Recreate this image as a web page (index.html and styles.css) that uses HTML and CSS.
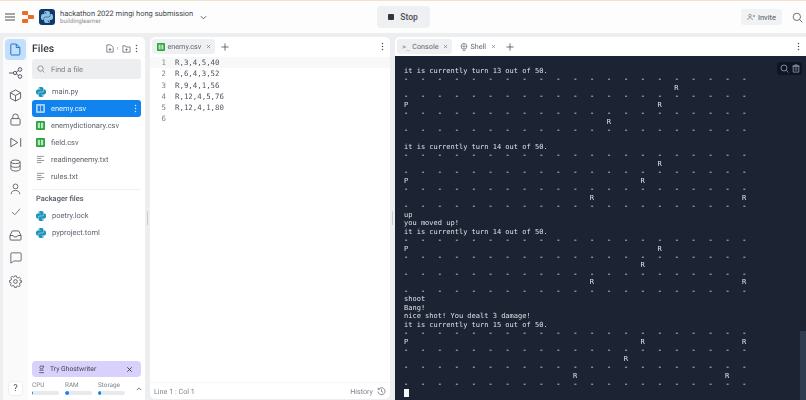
FILE: index.html
```html
<!DOCTYPE html>
<html lang="en">
<head>
<meta charset="utf-8">
<title>hackathon 2022 mingi hong submission</title>
<link rel="stylesheet" href="styles.css">
</head>
<body>
<svg class="defs" width="0" height="0" aria-hidden="true">
  <defs>
    <symbol id="py" viewBox="0 0 24 24">
      <path d="M14.25.18l.9.2.73.26.59.3.45.32.34.34.25.34.16.33.1.3.04.26.02.2-.01.13V8.5l-.05.63-.13.55-.21.46-.26.38-.3.31-.33.25-.35.19-.35.14-.33.1-.3.07-.26.04-.21.02H8.77l-.69.05-.59.14-.5.22-.41.27-.33.32-.27.35-.2.36-.15.37-.1.35-.07.32-.04.27-.02.21v3.06H3.17l-.21-.03-.28-.07-.32-.12-.35-.18-.36-.26-.36-.36-.35-.46-.32-.59-.28-.73-.21-.88-.14-1.05-.05-1.23.06-1.22.16-1.04.24-.87.32-.71.36-.57.4-.44.42-.33.42-.24.4-.16.36-.1.32-.05.24-.01h.16l.06.01h8.16v-.83H6.18l-.01-2.75-.02-.37.05-.34.11-.31.17-.28.25-.26.31-.23.38-.2.44-.18.51-.15.58-.12.64-.1.71-.06.77-.04.84-.02 1.27.05zm-6.3 1.98l-.23.33-.08.41.08.41.23.34.33.22.41.09.41-.09.33-.22.23-.34.08-.41-.08-.41-.23-.33-.33-.22-.41-.09-.41.09zm13.09 3.95l.28.06.32.12.35.18.36.27.36.35.35.47.32.59.28.73.21.88.14 1.04.05 1.23-.06 1.23-.16 1.04-.24.86-.32.71-.36.57-.4.45-.42.33-.42.24-.4.16-.36.09-.32.05-.24.02-.16-.01h-8.22v.82h5.84l.01 2.76.02.36-.05.34-.11.31-.17.29-.25.25-.31.24-.38.2-.44.17-.51.15-.58.13-.64.09-.71.07-.77.04-.84.01-1.27-.04-1.07-.14-.9-.2-.73-.25-.59-.3-.45-.33-.34-.34-.25-.34-.16-.33-.1-.3-.04-.25-.02-.2.01-.13v-5.34l.05-.64.13-.54.21-.46.26-.38.3-.32.33-.24.35-.2.35-.14.33-.1.3-.06.26-.04.21-.02.13-.01h5.84l.69-.05.59-.14.5-.21.41-.28.33-.32.27-.35.2-.36.15-.36.1-.35.07-.32.04-.28.02-.21V6.07h2.09l.14.01zm-6.47 14.25l-.23.33-.08.41.08.41.23.33.33.23.41.08.41-.08.33-.23.23-.33.08-.41-.08-.41-.23-.33-.33-.23-.41-.08-.41.08z"/>
    </symbol>
    <symbol id="csv" viewBox="0 0 10 10">
      <rect width="10" height="10" rx="1" fill="#2ba53f"/>
      <rect x="2" y="2" width="2.500" height="6" fill="#b9e6c2"/>
      <rect x="5.500" y="2" width="2.500" height="6" fill="#b9e6c2"/>
    </symbol>
    <symbol id="txt" viewBox="0 0 10 10">
      <path d="M1 1.500h8M1 3.800h5M1 6.100h8M1 8.400h5" fill="none" stroke="#8a8f98" stroke-width="1"/>
    </symbol>
    <symbol id="dots" viewBox="0 0 4 12">
      <circle cx="2" cy="2" r="1"/><circle cx="2" cy="6" r="1"/><circle cx="2" cy="10" r="1"/>
    </symbol>
    <symbol id="x" viewBox="0 0 8 8">
      <path d="M1.500 1.500l5 5M6.500 1.500l-5 5" fill="none" stroke="currentColor" stroke-width="1"/>
    </symbol>
    <symbol id="plus" viewBox="0 0 10 10">
      <path d="M5 .5v9M.5 5h9" fill="none" stroke="currentColor" stroke-width="1"/>
    </symbol>
    <symbol id="search" viewBox="0 0 12 12">
      <circle cx="5.300" cy="5.300" r="4" fill="none" stroke="currentColor" stroke-width="1"/>
      <path d="M8.300 8.300l3 3" fill="none" stroke="currentColor" stroke-width="1"/>
    </symbol>
  </defs>
</svg>

<div class="app">
  <header class="topbar">
    <div class="top-left">
      <svg class="burger" viewBox="0 0 10 8" width="10" height="8"><path d="M0 1h10M0 4h10M0 7h10" stroke="#4a4f57" stroke-width="1"/></svg>
      <svg class="replit" viewBox="0 0 12 12" width="12" height="12"><path d="M1 0h4a1 1 0 0 1 1 1v3H1a1 1 0 0 1-1-1V1a1 1 0 0 1 1-1zM6 4h5a1 1 0 0 1 1 1v2a1 1 0 0 1-1 1H6zM1 8h5v3a1 1 0 0 1-1 1H1a1 1 0 0 1-1-1V9a1 1 0 0 1 1-1z" fill="#ef6a24"/></svg>
      <div class="avatar"><svg width="12" height="12"><use href="#py" fill="#8fc0e4"/></svg></div>
      <div class="titles">
        <div class="title">hackathon 2022 mingi hong submission</div>
        <div class="owner">buildinglearner</div>
      </div>
      <svg class="chev" viewBox="0 0 8 5" width="7" height="5"><path d="M1 1l3 3 3-3" fill="none" stroke="#4a4f57" stroke-width="1"/></svg>
    </div>
    <button class="stop"><span class="stop-sq"></span>Stop</button>
    <div class="top-right">
      <button class="invite">
        <svg viewBox="0 0 12 10" width="11" height="10"><circle cx="4.500" cy="2.800" r="2" fill="none" stroke="#5f6570" stroke-width=".9"/><path d="M.8 9.500c0-2.200 1.600-3.300 3.700-3.300s3.700 1.100 3.700 3.300M9 3.500h3M10.500 2v3" fill="none" stroke="#5f6570" stroke-width=".9"/></svg>
        Invite
      </button>
      <svg class="top-search" width="11" height="11"><use href="#search"/></svg>
    </div>
  </header>

  <main class="workspace">
    <section class="left panel">
      <nav class="rail">
        <div class="rail-btn active"><svg viewBox="0 0 14 16" width="11" height="13"><path d="M2 1h6l4.500 4.500V14a1 1 0 0 1-1 1H2a1 1 0 0 1-1-1V2a1 1 0 0 1 1-1zM8 1v4.500h4.500" fill="none" stroke="#1d6fc4" stroke-width="1.200"/></svg></div>
        <div class="rail-btn"><svg viewBox="0 0 14 12" width="14" height="12"><circle cx="6" cy="6" r="1.600" fill="none" stroke="#555b64"/><circle cx="11" cy="2.500" r="1.800" fill="none" stroke="#555b64"/><circle cx="11" cy="9.500" r="1.800" fill="none" stroke="#555b64"/><path d="M0 6h4.400M7.400 5l2.200-1.500M7.400 7l2.200 1.500" fill="none" stroke="#555b64"/></svg></div>
        <div class="rail-btn"><svg viewBox="0 0 14 14" width="13" height="13"><path d="M7 1l5.500 3v6L7 13 1.500 10V4zM1.500 4L7 7l5.500-3M7 7v6" fill="none" stroke="#555b64"/></svg></div>
        <div class="rail-btn"><svg viewBox="0 0 12 14" width="11" height="13"><rect x="1" y="6" width="10" height="7" rx="1.200" fill="none" stroke="#555b64"/><path d="M3 6V4a3 3 0 0 1 6 0v2" fill="none" stroke="#555b64"/></svg></div>
        <div class="rail-btn"><svg viewBox="0 0 14 12" width="12" height="11"><path d="M1 1l8 5-8 5zM12.500 1v10" fill="none" stroke="#555b64" stroke-width="1.100"/></svg></div>
        <div class="rail-btn"><svg viewBox="0 0 12 14" width="11" height="13"><ellipse cx="6" cy="3" rx="5" ry="2" fill="none" stroke="#555b64"/><path d="M1 3v8c0 1.100 2.200 2 5 2s5-.9 5-2V3M1 7c0 1.100 2.200 2 5 2s5-.9 5-2" fill="none" stroke="#555b64"/></svg></div>
        <div class="rail-btn"><svg viewBox="0 0 12 14" width="11" height="12"><circle cx="6" cy="4" r="2.800" fill="none" stroke="#555b64"/><path d="M1 13c0-3 2.200-4.300 5-4.300s5 1.300 5 4.300" fill="none" stroke="#555b64"/></svg></div>
        <div class="rail-btn"><svg viewBox="0 0 12 10" width="10" height="8"><path d="M1 5l3.500 3.500L11 1" fill="none" stroke="#555b64"/></svg></div>
        <div class="rail-btn"><svg viewBox="0 0 14 12" width="13" height="11"><path d="M1 6l2.500-5h7L13 6v4a1 1 0 0 1-1 1H2a1 1 0 0 1-1-1zM1 6h3.500l1 1.500h3l1-1.500H13" fill="none" stroke="#555b64"/></svg></div>
        <div class="rail-btn"><svg viewBox="0 0 14 14" width="12" height="12"><path d="M2 1h10a1 1 0 0 1 1 1v7.500a1 1 0 0 1-1 1H4.500L1 13V2a1 1 0 0 1 1-1z" fill="none" stroke="#555b64"/></svg></div>
        <div class="rail-btn"><svg viewBox="0 0 14 14" width="13" height="13"><circle cx="7" cy="7" r="2" fill="none" stroke="#555b64"/><path d="M6 1h2l.4 1.700 1.300.6 1.500-.9 1.400 1.400-.9 1.500.6 1.300L13.500 6v2l-1.700.4-.6 1.300.9 1.500-1.400 1.400-1.500-.9-1.300.6L8 13.500H6l-.4-1.700-1.300-.6-1.500.9-1.400-1.400.9-1.500-.6-1.300L.5 8V6l1.700-.4.6-1.300-.9-1.500 1.400-1.400 1.500.9 1.300-.6z" fill="none" stroke="#555b64" stroke-width=".9"/></svg></div>
        <div class="help">?</div>
      </nav>

      <div class="files">
        <div class="files-head">
          <h2>Files</h2>
          <div class="files-actions">
            <svg viewBox="0 0 10 11" width="8" height="9"><path d="M1 1h5l3 3v6H1zM5 5v3.500M3.300 6.700h3.400" fill="none" stroke="#555b64" stroke-width=".9"/></svg>
            <span class="tick"></span>
            <svg viewBox="0 0 11 10" width="9" height="8"><path d="M1 1h3l1 1.500h5V9H1zM5.500 4.300v3M4 5.800h3" fill="none" stroke="#555b64" stroke-width=".9"/></svg>
            <svg class="dots" width="3" height="9"><use href="#dots"/></svg>
          </div>
        </div>
        <div class="find"><svg width="8" height="8"><use href="#search"/></svg>Find a file</div>
        <ul class="tree">
          <li><svg class="py" width="10" height="10"><use href="#py"/></svg>main.py</li>
          <li class="sel"><svg viewBox="0 0 10 10" width="9" height="9"><rect width="10" height="10" rx="1" fill="#a9d1f7"/><rect x="2" y="2" width="2.500" height="6" fill="#1083ee"/><rect x="5.500" y="2" width="2.500" height="6" fill="#1083ee"/></svg>enemy.csv<svg class="sel-dots" width="3" height="9"><use href="#dots"/></svg></li>
          <li><svg width="9" height="9"><use href="#csv"/></svg>enemydictionary.csv</li>
          <li><svg width="9" height="9"><use href="#csv"/></svg>field.csv</li>
          <li><svg width="9" height="9"><use href="#txt"/></svg>readingenemy.txt</li>
          <li><svg width="9" height="9"><use href="#txt"/></svg>rules.txt</li>
        </ul>
        <div class="pack-title">Packager files</div>
        <ul class="tree">
          <li><svg class="py" width="10" height="10"><use href="#py"/></svg>poetry.lock</li>
          <li><svg class="py" width="10" height="10"><use href="#py"/></svg>pyproject.toml</li>
        </ul>
        <div class="files-foot">
          <div class="ghost">
            <svg viewBox="0 0 10 12" width="7" height="9"><circle cx="5" cy="3" r="2.300" fill="none" stroke="#33373d"/><path d="M2 7h6M1.500 10.500h7M8 .5v2" stroke="#33373d" fill="none"/></svg>
            <span>Try Ghostwriter</span>
            <svg class="ghost-x" width="7" height="7"><use href="#x"/></svg>
          </div>
          <div class="meters">
            <div class="meter"><span>CPU</span><i><b class="cpu"></b></i></div>
            <div class="meter"><span>RAM</span><i><b class="ram"></b></i></div>
            <div class="meter"><span>Storage</span><i><b class="sto"></b></i></div>
            <svg class="meter-chev" viewBox="0 0 8 5" width="6" height="4"><path d="M1 4l3-3 3 3" fill="none" stroke="#4a4f57"/></svg>
          </div>
        </div>
      </div>
    </section>

    <section class="editor panel">
      <div class="tabs">
        <div class="tab on"><svg width="8" height="8"><use href="#csv"/></svg>enemy.csv<svg class="tab-x" width="5" height="5"><use href="#x"/></svg></div>
        <svg class="tab-plus" width="8" height="8"><use href="#plus"/></svg>
        <svg class="tab-dots" width="3" height="9"><use href="#dots"/></svg>
      </div>
      <div class="code">
        <div class="ln cur"><span>1</span>R,3,4,5,40</div>
        <div class="ln"><span>2</span>R,6,4,3,52</div>
        <div class="ln"><span>3</span>R,9,4,1,56</div>
        <div class="ln"><span>4</span>R,12,4,5,76</div>
        <div class="ln"><span>5</span>R,12,4,1,80</div>
        <div class="ln"><span>6</span></div>
      </div>
      <div class="status"><span>Line 1 : Col 1</span><span class="hist">History<svg viewBox="0 0 12 12" width="9" height="9"><path d="M2.500 2.500A4.700 4.700 0 1 1 1.300 6M6 3.200V6l2 1.200M1.500 1v2.200h2.200" fill="none" stroke="#5f6570"/></svg></span></div>
    </section>

    <section class="console panel">
      <div class="tabs">
        <div class="tab on"><span class="prompt">&gt;_</span>Console<svg class="tab-x" width="5" height="5"><use href="#x"/></svg></div>
        <div class="tab"><svg viewBox="0 0 10 10" width="8" height="8"><circle cx="5" cy="4.200" r="3.600" fill="none" stroke="#70767f"/><path d="M1.500 4.200h7M5 .6v7.200M3 9.500h4" fill="none" stroke="#70767f" stroke-width=".8"/></svg>Shell<svg class="tab-x" width="5" height="5"><use href="#x"/></svg></div>
        <svg class="tab-plus" width="8" height="8"><use href="#plus"/></svg>
        <svg class="tab-dots" width="3" height="9"><use href="#dots"/></svg>
      </div>
      <div class="term">
        <div class="term-tools">
          <svg width="9" height="9"><use href="#search"/></svg>
          <svg viewBox="0 0 10 11" width="8" height="9"><path d="M1.500 2.500h7v7.500h-7zM.5 2.500h9M3.500 2.500V1h3v1.500M3.300 5h3.400M3.300 7.300h3.400" fill="none" stroke="currentColor" stroke-width=".9"/></svg>
        </div>
        <div class="scroll-thumb"></div>
<pre class="out">it is currently turn 13 out of 50.
<b>-   -   -   -   -   -   -   -   -   -   -   -   -   -   -   -   -   -   -   -   -</b>
                                                                R
<b>-   -   -   -   -   -   -   -   -   -   -   -   -   -   -   -   -   -   -   -   -</b>
P                                                           R
<b>-   -   -   -   -   -   -   -   -   -   -   -   -   -   -   -   -   -   -   -   -</b>
                                                R
<b>-   -   -   -   -   -   -   -   -   -   -   -   -   -   -   -   -   -   -   -   -</b>

it is currently turn 14 out of 50.
<b>-   -   -   -   -   -   -   -   -   -   -   -   -   -   -   -   -   -   -   -   -</b>
                                                            R
<b>-   -   -   -   -   -   -   -   -   -   -   -   -   -   -   -   -   -   -   -   -</b>
P                                                       R
<b>-   -   -   -   -   -   -   -   -   -   -   -   -   -   -   -   -   -   -   -   -</b>
                                            R                                   R
<b>-   -   -   -   -   -   -   -   -   -   -   -   -   -   -   -   -   -   -   -   -</b>
up
you moved up!
it is currently turn 14 out of 50.
<b>-   -   -   -   -   -   -   -   -   -   -   -   -   -   -   -   -   -   -   -   -</b>
P                                                           R
<b>-   -   -   -   -   -   -   -   -   -   -   -   -   -   -   -   -   -   -   -   -</b>
                                                        R
<b>-   -   -   -   -   -   -   -   -   -   -   -   -   -   -   -   -   -   -   -   -</b>
                                            R                                   R
<b>-   -   -   -   -   -   -   -   -   -   -   -   -   -   -   -   -   -   -   -   -</b>
shoot
Bang!
nice shot! You dealt 3 damage!
it is currently turn 15 out of 50.
<b>-   -   -   -   -   -   -   -   -   -   -   -   -   -   -   -   -   -   -   -   -</b>
P                                                       R                       R
<b>-   -   -   -   -   -   -   -   -   -   -   -   -   -   -   -   -   -   -   -   -</b>
                                                    R
<b>-   -   -   -   -   -   -   -   -   -   -   -   -   -   -   -   -   -   -   -   -</b>
                                        R                                   R
<b>-   -   -   -   -   -   -   -   -   -   -   -   -   -   -   -   -   -   -   -   -</b>
<span class="cursor"></span></pre>
      </div>
    </section>
    <span class="grip grip-a"></span>
    <span class="grip grip-b"></span>
  </main>
</div>
</body>
</html>
```

FILE: styles.css
```css
* { box-sizing: border-box; }
html, body { margin: 0; height: 100%; }
body {
  width: 806px;
  height: 400px;
  overflow: hidden;
  background: #eceef0;
  font-family: Roboto, "Noto Sans", sans-serif;
  color: #3c4149;
  text-rendering: geometricPrecision;
}
.defs { position: absolute; }
ul { list-style: none; margin: 0; padding: 0; }
button { font: inherit; border: 0; }

.app { display: flex; flex-direction: column; height: 400px; filter: blur(.3px); }

.topbar {
  height: 33px;
  flex: none;
  display: grid;
  grid-template-columns: 1fr auto 1fr;
  align-items: center;
  background: #fdfdfd;
  border-top: 1px solid #f3e0ca;
}
.top-left { display: flex; align-items: center; padding-left: 5px; }
.replit { margin-left: 7px; }
.avatar {
  width: 16px; height: 16px;
  margin-left: 5px;
  border-radius: 3px;
  background: #0b3a6b;
  display: flex; align-items: center; justify-content: center;
}
.titles { margin-left: 5px; }
.title { font-size: 7.500px; line-height: 9px; color: #44494f; white-space: nowrap; }
.owner { font-size: 6.200px; line-height: 7px; color: #8b9098; }
.chev { margin-left: 7px; margin-top: 1px; }
.stop {
  width: 53px; height: 22px;
  display: flex; align-items: center; justify-content: center; gap: 6px;
  background: #eff0f2;
  border-radius: 4px;
  font-size: 8.500px;
  font-weight: 500;
  color: #4a4f57;
}
.stop-sq { width: 6px; height: 6px; border-radius: 1px; background: #33373d; }
.top-right { display: flex; align-items: center; justify-content: flex-end; padding-right: 3px; }
.invite {
  width: 41px; height: 16px;
  display: flex; align-items: center; justify-content: center; gap: 3px;
  background: #f1f2f3;
  border-radius: 3px;
  font-size: 7.500px;
  color: #4f545c;
}
.top-search { margin-left: 10px; color: #5f6570; }

.workspace { position: relative; flex: 1; min-height: 0; display: flex; gap: 5px; padding: 4px 0 0 3px; }
.panel { background: #fff; border-radius: 5px 5px 0 0; overflow: hidden; }
.grip { position: absolute; top: 178px; width: 1.500px; height: 14px; background: #c8cbd0; border-radius: 1px; }
.grip-a { left: 146.700px; }
.grip-b { left: 391.700px; }

.left { width: 142px; flex: none; display: flex; }
.rail {
  width: 25px; flex: none;
  display: flex; flex-direction: column; align-items: center;
  padding-top: 2px;
  background: #fafafb;
}
.rail-btn {
  width: 21px; height: 21px;
  margin-bottom: 2.200px;
  display: flex; align-items: center; justify-content: center;
  border-radius: 4px;
  flex: none;
}
.rail-btn.active { background: #c3dffb; }
.help {
  margin-top: auto;
  margin-bottom: 4px;
  width: 15px; height: 15px;
  border: 1px solid #eceef0;
  border-radius: 4px;
  background: #fff;
  font-size: 9.500px;
  line-height: 13px;
  text-align: center;
  color: #4a4f57;
}

.files { flex: 1; min-width: 0; display: flex; flex-direction: column; padding: 0 4px; }
.files-head { height: 22px; display: flex; align-items: center; justify-content: space-between; padding-top: 1px; }
.files-head h2 { margin: 0; font-size: 10.500px; font-weight: 500; color: #33373d; }
.files-actions { display: flex; align-items: center; gap: 3.500px; color: #555b64; padding-right: 3px; }
.tick { width: 1px; height: 3px; background: #c8cbd0; }
.dots { margin-left: 1px; fill: #555b64; }
.find {
  height: 20px;
  margin-bottom: 4px;
  display: flex; align-items: center; gap: 6px;
  padding-left: 5px;
  background: #eceef0;
  border-radius: 3px;
  font-size: 7.500px;
  color: #7d828a;
}
.find svg { color: #6d727a; }
.tree li {
  position: relative;
  height: 17px;
  display: flex; align-items: center; gap: 6px;
  padding-left: 4px;
  border-radius: 3px;
  font-size: 7.500px;
  color: #5f6570;
}
.tree .py { fill: #1c93b8; }
.tree .sel { background: #1083ee; color: #eaf4fe; }
.sel-dots { position: absolute; right: 4px; top: 4px; fill: #d4e8fc; }
.pack-title {
  margin-top: 4px;
  height: 18px;
  padding: 4px 0 0 4px;
  border-top: 1px solid #f0f1f3;
  font-size: 7.500px;
  font-weight: 500;
  color: #555b64;
}
.files-foot { margin-top: auto; }
.ghost {
  height: 16px;
  display: flex; align-items: center; gap: 5px;
  padding: 0 8px 0 6px;
  background: #d9d1fb;
  border-radius: 4px;
  font-size: 6.800px;
  color: #3f4350;
}
.ghost span { flex: 1; }
.ghost-x { color: #33373d; }
.meters { position: relative; display: flex; gap: 6px; height: 23px; padding-top: 4px; }
.meter { width: 27px; }
.meter span { display: block; font-size: 6.400px; line-height: 9px; color: #7d828a; }
.meter i { display: block; height: 4px; margin-top: 1px; background: #e7e9ec; border-radius: 2px; overflow: hidden; }
.meter b { display: block; height: 100%; background: #1083ee; border-radius: 2px; }
.cpu { width: 1px; }
.ram { width: 4px; }
.sto { width: 3px; }
.meter-chev { position: absolute; right: -1px; top: 10px; }

.editor { width: 240px; flex: none; display: flex; flex-direction: column; border-radius: 5px; margin-bottom: 1px; }
.tabs { height: 19px; flex: none; display: flex; align-items: center; padding-left: 2px; position: relative; }
.tab {
  height: 15px;
  display: flex; align-items: center; gap: 2.500px;
  padding: 0 4px 0 5px;
  border-radius: 3px;
  font-size: 7.200px;
  color: #5f6570;
}
.tab.on { background: #eff0f2; }
.tab-x { margin-left: 2px; color: #70767f; }
.tab-plus { margin-left: 6px; color: #4a4f57; }
.tab-dots { position: absolute; right: 6px; top: 5px; fill: #4a4f57; }
.prompt { font-family: "DejaVu Sans Mono", monospace; font-size: 6.500px; }

.code { flex: 1; padding-top: 1px; font-family: "DejaVu Sans Mono", monospace; font-size: 7.400px; color: #4f545c; }
.ln { height: 11.300px; line-height: 11.300px; display: flex; white-space: pre; }
.ln.cur { background: #f8f8f9; }
.ln span { width: 25px; padding-right: 9px; text-align: right; color: #7d828a; flex: none; }
.status {
  height: 17px; flex: none;
  display: flex; align-items: center; justify-content: space-between;
  padding: 0 4px;
  border-top: 1px solid #f6f6f7;
  font-size: 7.200px;
  color: #80858d;
}
.hist { display: flex; align-items: center; gap: 4px; }

.console { flex: 1; min-width: 0; display: flex; flex-direction: column; border-radius: 5px 0 0 0; }
.console .tab + .tab { margin-left: 3px; }
.term { flex: 1; min-height: 0; position: relative; background: #1c2333; overflow: hidden; padding: 10.700px 0 0 9px; }
.out {
  margin: 0;
  font-family: "DejaVu Sans Mono", monospace;
  font-size: 7.030px;
  line-height: 8.470px;
  color: #dde0e5;
}
.out b {
  font-family: "Liberation Mono", monospace;
  font-size: 7.050px;
  font-weight: 700;
  line-height: 0;
  color: #c3c8cf;
}
.cursor { display: inline-block; width: 5px; height: 8px; background: #f4f5f6; vertical-align: -1px; }
.term-tools {
  position: absolute; right: 4px; top: 6px;
  width: 25px; height: 13px;
  display: flex; align-items: center; justify-content: center; gap: 3px;
  background: #0e1525;
  border-radius: 3px;
  color: #a8adb5;
}
.scroll-thumb { position: absolute; right: 0; bottom: 0; width: 6px; height: 69px; background: #2f3b4e; }
```
